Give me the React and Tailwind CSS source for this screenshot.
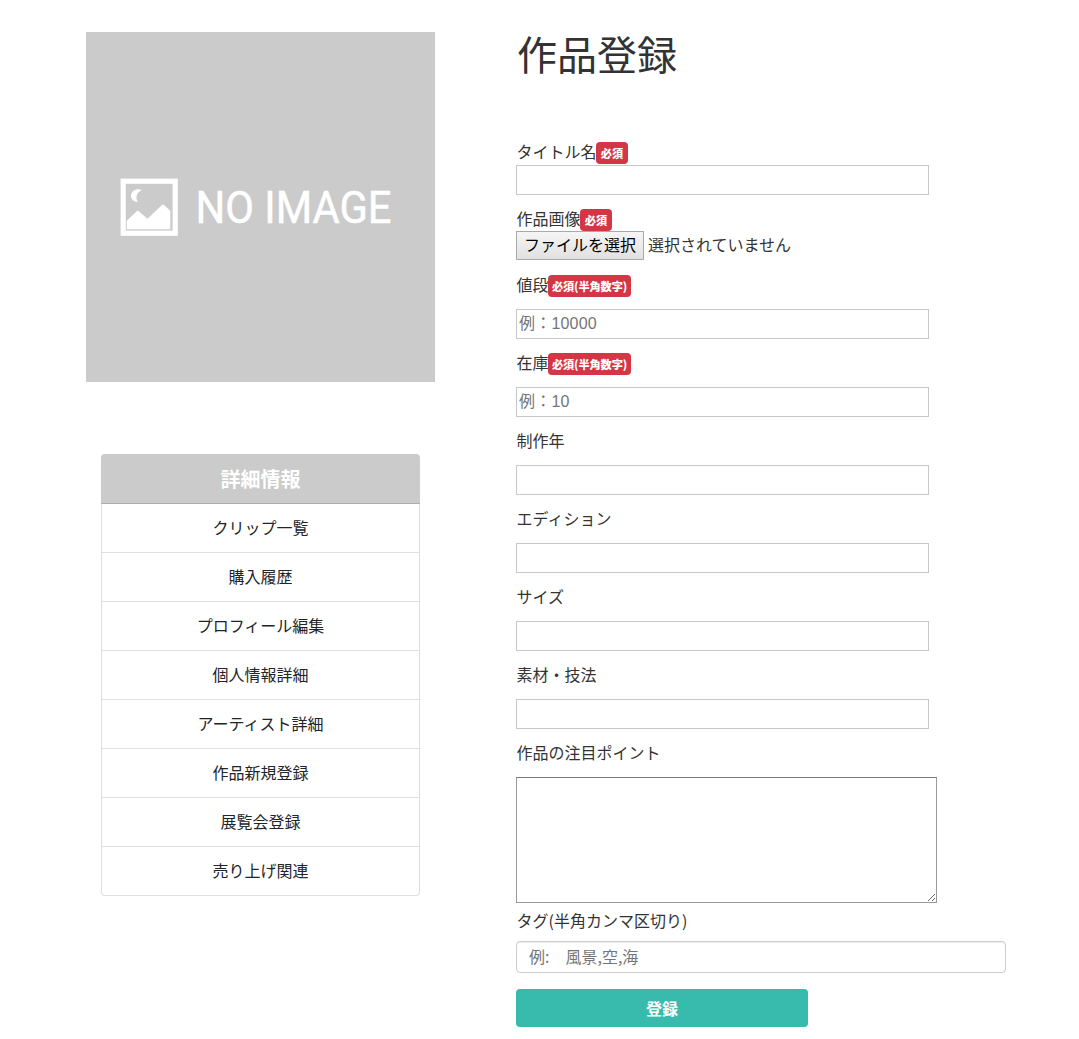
const menu = [
  'クリップ一覧',
  '購入履歴',
  'プロフィール編集',
  '個人情報詳細',
  'アーティスト詳細',
  '作品新規登録',
  '展覧会登録',
  '売り上げ関連',
];

const fields = [
  { label: '値段', badge: '必須(半角数字)', placeholder: '例：10000' },
  { label: '在庫', badge: '必須(半角数字)', placeholder: '例：10' },
  { label: '制作年' },
  { label: 'エディション' },
  { label: 'サイズ' },
  { label: '素材・技法' },
];

function Badge({ wide, children }) {
  return (
    <span
      className={`mt-[3px] flex h-[22px] shrink-0 items-center justify-center whitespace-nowrap rounded-[4px] bg-[#d33644] pt-px text-[11.2px] leading-none font-black text-white ${wide ? 'w-[83px] tracking-[-0.1px]' : 'w-8'}`}
    >
      {children}
    </span>
  );
}

function Label({ badge, children }) {
  return (
    <div className="flex h-6 items-start pl-[0.5px] text-base leading-6">
      <span className={badge ? '-mr-[0.5px]' : ''}>{children}</span>
      {badge && <Badge wide={badge.length > 2}>{badge}</Badge>}
    </div>
  );
}

function TextInput({ placeholder }) {
  return (
    <input
      type="text"
      placeholder={placeholder}
      className="block h-[30px] w-[413px] border border-[#c8c8c8] bg-white px-[2px] font-['Liberation_Sans','Noto_Sans_CJK_JP',sans-serif] text-base tracking-[0.2px] placeholder:text-[#757575]"
    />
  );
}

function NoImage() {
  return (
    <div className="h-[350px] w-[349px] bg-[#cbcbcb]">
      <svg viewBox="0 0 349 350" className="block h-full w-full">
        <rect x="37.2" y="149.2" width="52" height="52" fill="none" stroke="#fff" strokeWidth="5.2" />
        <path
          d="M41 188.8 51 179.3Q51.7 178.7 52.4 179.3L61.5 187 76 173.2Q77 172.3 78 173.2L84 178.8V197H41Z"
          fill="#fff"
          stroke="#fff"
          strokeWidth="0.5"
        />
        <path d="M56 158C51 156 45 158.5 45 163.8C45 167.5 48 170 51.8 170C49.2 165.5 50.5 160.3 56 158Z" fill="#fff" />
        <text
          x="109.5"
          y="191"
          fontFamily="Roboto, sans-serif"
          fontSize="43.5"
          fill="#fff"
          stroke="#fff"
          strokeWidth="0.5"
          textLength="196"
          lengthAdjust="spacingAndGlyphs"
        >
          NO IMAGE
        </text>
      </svg>
    </div>
  );
}

export default function App() {
  return (
    <main className="flex h-[1039px] w-[1079px] overflow-hidden bg-white pt-8 pl-[86px] font-['Noto_Sans_CJK_JP',sans-serif] text-[#333]">
      <aside className="w-[349px] shrink-0">
        <NoImage />
        <nav className="mx-[15px] mt-[72px] text-center text-[#212529]">
          <h2 className="flex h-[50px] items-center justify-center rounded-t-[4px] border-b border-[#adadad] bg-[#cbcbcb] text-xl font-bold text-white">
            詳細情報
          </h2>
          <ul className="overflow-hidden rounded-b-[4px] border border-t-0 border-[#dfdfdf]">
            {menu.map((item) => (
              <li key={item} className="h-[49px] border-b border-[#dfdfdf] text-base leading-[47px] last:h-12 last:border-b-0">
                {item}
              </li>
            ))}
          </ul>
        </nav>
      </aside>

      <form className="ml-[81px] w-[490px] shrink-0">
        <h1 className="h-[107px] pl-px text-[40px] leading-[43px]">作品登録</h1>

        <Label badge="必須">タイトル名</Label>
        <div className="mt-[2px]">
          <TextInput />
        </div>

        <div className="mt-[11px]">
          <Label badge="必須">作品画像</Label>
        </div>
        <div className="mt-px flex h-[29px] items-start">
          <button
            type="button"
            className="flex h-[29px] w-[128px] justify-center border border-[#a9a9a9] bg-linear-to-b from-[#f5f5f5] to-[#e1e1e1] text-base leading-[24px] text-black"
          >
            ファイルを選択
          </button>
          <span className="ml-1 text-base leading-[26px]">選択されていません</span>
        </div>

        <div className="mt-3 flex flex-col gap-[11px]">
          {fields.map((f) => (
            <div key={f.label}>
              <Label badge={f.badge}>{f.label}</Label>
              <div className="mt-[13px]">
                <TextInput placeholder={f.placeholder} />
              </div>
            </div>
          ))}
        </div>

        <div className="mt-[11px]">
          <Label>作品の注目ポイント</Label>
        </div>
        <textarea className="mt-[13px] block h-[126px] w-[421px] resize border border-[#999] border-t-[#777] bg-white" />

        <div className="mt-[5px]">
          <Label>タグ(半角カンマ区切り)</Label>
        </div>
        <input
          type="text"
          placeholder="例:　風景,空,海"
          className="mt-[9px] block h-8 w-[490px] rounded-[4px] border border-[#ccc] bg-white px-3 pb-[2px] text-base shadow-[inset_0_1px_1px_rgba(0,0,0,0.075)] placeholder:text-[#757575]"
        />
        <button
          type="button"
          className="mt-4 block h-[38px] w-[292px] rounded-[4px] bg-[#38bbad] text-base leading-[36px] font-bold text-white"
        >
          登録
        </button>
      </form>
    </main>
  );
}
